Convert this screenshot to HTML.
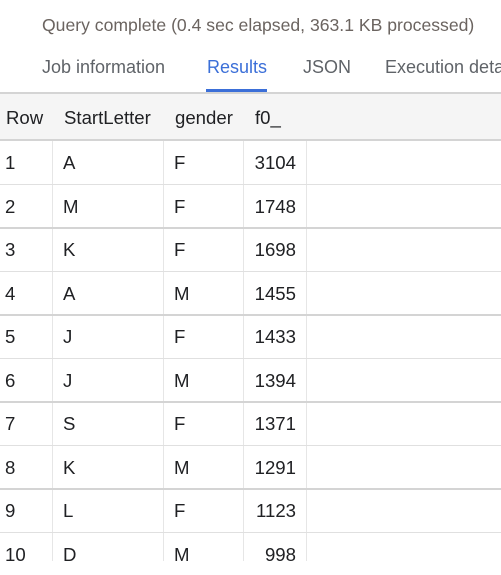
<!DOCTYPE html>
<html><head><style>
body{margin:0;width:501px;height:575px;overflow:hidden;background:#fff;font-family:"Liberation Sans",Arial,sans-serif;position:relative}
.a{position:absolute;white-space:nowrap}
.st{top:15px;left:42px;font-size:17.6px;color:#6b6460}
.tab{top:57px;font-size:18px;color:#5f6368}
.hl{position:absolute;left:0;width:501px}
.c{position:absolute;font-size:18.6px;color:#202124;white-space:nowrap}
.v{position:absolute;width:1px;background:#e6e6e6;top:141px;height:420px}
</style></head><body>
<div class="a st">Query complete (0.4 sec elapsed, 363.1 KB processed)</div>
<div class="a tab" style="left:42px">Job information</div>
<div class="a tab" style="left:207px;color:#3b6fd8">Results</div>
<div class="a tab" style="left:303px">JSON</div>
<div class="a tab" style="left:385px">Execution details</div>
<div class="a" style="left:206px;top:89px;width:61px;height:3px;background:#3b6fd8"></div>
<div class="hl" style="top:92px;height:2px;background:#d4d4d4"></div>
<div class="hl" style="top:94px;height:46px;background:#f5f5f5"></div>
<div class="hl" style="top:139px;height:2px;background:#d4d4d4"></div>
<div class="c" style="left:6px;top:107px">Row</div>
<div class="c" style="left:64px;top:107px">StartLetter</div>
<div class="c" style="left:175px;top:107px">gender</div>
<div class="c" style="left:255px;top:107px">f0_</div>
<div class="v" style="left:52px"></div>
<div class="v" style="left:163px"></div>
<div class="v" style="left:243px"></div>
<div class="v" style="left:306px"></div>
<div id="rows"></div>
<div class="hl" style="top:561px;height:14px;background:#fff"></div>
<script>
var d=[["1","A","F","3104"],["2","M","F","1748"],["3","K","F","1698"],["4","A","M","1455"],["5","J","F","1433"],["6","J","M","1394"],["7","S","F","1371"],["8","K","M","1291"],["9","L","F","1123"],["10","D","M","998"]];
var h="";
for(var i=0;i<d.length;i++){var t=141+i*43.5;
h+='<div class="c" style="left:5px;top:'+(t+11)+'px">'+d[i][0]+'</div>';
h+='<div class="c" style="left:63px;top:'+(t+11)+'px">'+d[i][1]+'</div>';
h+='<div class="c" style="left:174px;top:'+(t+11)+'px">'+d[i][2]+'</div>';
h+='<div class="c" style="left:236px;width:60px;text-align:right;top:'+(t+11)+'px">'+d[i][3]+'</div>';
if(i<9){var th=(i%2==1)?2:1;
h+='<div class="hl" style="top:'+Math.round(t+43.5-th/2)+'px;height:'+th+'px;background:'+(th==2?'#d4d4d4':'#e0e0e0')+'"></div>';}}
document.getElementById('rows').innerHTML=h;
</script>
</body></html>
